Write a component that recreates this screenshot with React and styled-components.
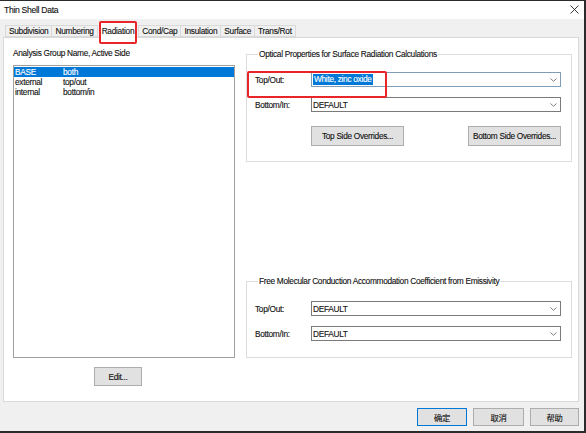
import React from "react";
import styled, { createGlobalStyle } from "styled-components";

const Global = createGlobalStyle`
  html, body { margin: 0; padding: 0; background: #2b2b2b; }
  body { width: 586px; height: 433px; overflow: hidden; }
  * { box-sizing: border-box; }
`;

const Screen = styled.div`
  width: 586px;
  height: 433px;
  padding: 1px 2px 2px 0;
  background: #2b2b2b;
`;

const Window = styled.div`
  width: 584px;
  height: 430px;
  background: #f0f0f0;
  display: flex;
  flex-direction: column;
  font-family: "Liberation Sans", Arial, "Noto Sans CJK SC", sans-serif;
  font-size: 8.3px;
  letter-spacing: -0.3px;
  color: #111;
  -webkit-text-stroke: 0.12px #111;
`;

const TitleBar = styled.div`
  height: 18px;
  background: #fff;
  display: flex;
  align-items: center;
  justify-content: space-between;
  padding: 0 5px 1px 4px;
  font-size: 8.6px;
`;

const Body = styled.div`
  flex: 1;
  display: flex;
  flex-direction: column;
  padding: 0 5px 0 3px;
`;

const TabStrip = styled.div`
  height: 18px;
  display: flex;
  align-items: flex-end;
  padding-left: 2px;
  position: relative;
  z-index: 1;
`;

const Tab = styled.div`
  height: ${(p) => (p.$active ? "16px" : "12px")};
  margin-bottom: ${(p) => (p.$active ? "-1px" : "0")};
  margin-left: ${(p) => (p.$first ? "0" : p.$active ? "1px" : "-1px")};
  margin-right: ${(p) => (p.$active ? "2px" : "0")};
  padding: 0 ${(p) => (p.$active ? "2px" : "3px")};
  letter-spacing: -0.27px;
  display: flex;
  align-items: center;
  background: ${(p) => (p.$active ? "#fff" : "#f0f0f0")};
  border: 1px solid #d9d9d9;
  border-bottom: ${(p) => (p.$active ? "none" : "1px solid #d9d9d9")};
  position: relative;
  z-index: ${(p) => (p.$active ? 2 : 0)};
`;

const Panel = styled.div`
  height: 365px;
  background: #fff;
  border: 1px solid #d9d9d9;
  display: flex;
  gap: 11px;
  padding: 10px 6px 0 9px;
`;

const LeftCol = styled.div`
  width: 222px;
  display: flex;
  flex-direction: column;
`;

const Caption = styled.div`
  height: 10px;
  line-height: 10px;
  margin-bottom: 7px;
`;

const ListBox = styled.div`
  height: 293px;
  border: 1px solid #a0a0a0;
  padding-top: 1px;
`;

const ListRow = styled.div`
  height: 10px;
  line-height: 10px;
  display: flex;
  padding-left: 1px;
  background: ${(p) => (p.$selected ? "#0078d7" : "transparent")};
  color: ${(p) => (p.$selected ? "#fff" : "#111")};
  -webkit-text-stroke: 0.12px ${(p) => (p.$selected ? "#fff" : "#111")};
`;

const NameCell = styled.span`
  width: 48px;
`;

const Button = styled.button`
  height: ${(p) => p.$h || 20}px;
  width: ${(p) => p.$w}px;
  padding: 0;
  background: #e1e1e1;
  border: 1px solid ${(p) => (p.$default ? "#0078d7" : "#adadad")};
  font: inherit;
  letter-spacing: inherit;
  color: #111;
`;

const EditButton = styled(Button)`
  margin: 9px 0 0 81px;
`;

const RightCol = styled.div`
  width: 326px;
  display: flex;
  flex-direction: column;
  padding-top: 1px;
`;

const Group = styled.fieldset`
  margin: 0;
  margin-top: ${(p) => p.$gap || 0}px;
  height: ${(p) => p.$h}px;
  flex: none;
  border: 1px solid #dcdcdc;
  padding: ${(p) => p.$pt}px 10px 0 8px;
  position: relative;
`;

const Rows = styled.div`
  display: flex;
  flex-direction: column;
  gap: 10px;
`;

const Legend = styled.legend`
  padding: 0 1px;
  margin-left: 3px;
  height: 10px;
  line-height: 10px;
`;

const FieldRow = styled.div`
  display: flex;
  align-items: center;
  height: 15px;
`;

const FieldLabel = styled.span`
  width: 56px;
`;

const Combo = styled.div`
  flex: 1;
  height: 15px;
  border: 1px solid ${(p) => (p.$focus ? "#7f9db9" : "#7a7a7a")};
  background: #fff;
  display: flex;
  align-items: center;
  justify-content: space-between;
  padding: 0 3px 0 1px;
`;

const Selected = styled.span`
  background: #0078d7;
  color: #fff;
  -webkit-text-stroke: 0.12px #fff;
  padding: 0 1px;
  line-height: 11px;
`;

const ButtonRow = styled.div`
  display: flex;
  justify-content: space-between;
  padding-left: 56px;
  margin-top: 4px;
`;

const Footer = styled.div`
  display: flex;
  justify-content: flex-end;
  gap: 6px;
  padding-top: 6px;
  font-family: "Noto Sans CJK SC", sans-serif;
`;

const Highlight = styled.div`
  position: absolute;
  border: 2px solid #e8262a;
  border-radius: 2px;
  pointer-events: none;
`;

const Chevron = () => (
  <svg width="7" height="4" viewBox="0 0 7 4">
    <path d="M0.5 0.5 L3.5 3.3 L6.5 0.5" fill="none" stroke="#606060" strokeWidth="0.8" />
  </svg>
);

const CloseIcon = () => (
  <svg width="9" height="9" viewBox="0 0 9 9">
    <path d="M0.5 0.5 L8.5 8.5 M8.5 0.5 L0.5 8.5" stroke="#222" strokeWidth="0.9" />
  </svg>
);

const tabs = ["Subdivision", "Numbering", "Radiation", "Cond/Cap", "Insulation", "Surface", "Trans/Rot"];

const groups = [
  ["BASE", "both"],
  ["external", "top/out"],
  ["internal", "bottom/in"],
];

const ComboField = ({ label, value, focus }) => (
  <FieldRow>
    <FieldLabel>{label}</FieldLabel>
    <Combo $focus={focus}>
      {focus ? <Selected>{value}</Selected> : <span>{value}</span>}
      <Chevron />
    </Combo>
  </FieldRow>
);

export default function App() {
  return (
    <Screen>
      <Global />
      <Window>
        <TitleBar>
          <span>Thin Shell Data</span>
          <CloseIcon />
        </TitleBar>
        <Body>
          <TabStrip>
            {tabs.map((t, i) => (
              <Tab key={t} $first={i === 0} $active={t === "Radiation"}>
                {t}
                {t === "Radiation" && (
                  <Highlight style={{ left: -1, top: -2, right: -1, bottom: -6 }} />
                )}
              </Tab>
            ))}
          </TabStrip>
          <Panel>
            <LeftCol>
              <Caption>Analysis Group Name, Active Side</Caption>
              <ListBox>
                {groups.map(([n, s], i) => (
                  <ListRow key={n} $selected={i === 0}>
                    <NameCell>{n}</NameCell>
                    <span>{s}</span>
                  </ListRow>
                ))}
              </ListBox>
              <EditButton $w={48} $h={19}>Edit...</EditButton>
            </LeftCol>
            <RightCol>
              <Group $h={113} $pt={13}>
                <Legend>Optical Properties for Surface Radiation Calculations</Legend>
                <Rows>
                  <ComboField label="Top/Out:" value="White, zinc oxide" focus />
                  <ComboField label="Bottom/In:" value="DEFAULT" />
                  <ButtonRow>
                    <Button $w={93}>Top Side Overrides...</Button>
                    <Button $w={93}>Bottom Side Overrides...</Button>
                  </ButtonRow>
                </Rows>
                <Highlight style={{ left: 0, top: 12, width: 140, height: 27 }} />
              </Group>
              <Group $gap={114} $h={82} $pt={15}>
                <Legend>Free Molecular Conduction Accommodation Coefficient from Emissivity</Legend>
                <Rows>
                  <ComboField label="Top/Out:" value="DEFAULT" />
                  <ComboField label="Bottom/In:" value="DEFAULT" />
                </Rows>
              </Group>
            </RightCol>
          </Panel>
          <Footer>
            <Button $w={50} $h={18} $default>确定</Button>
            <Button $w={51} $h={18}>取消</Button>
            <Button $w={49} $h={18}>帮助</Button>
          </Footer>
        </Body>
      </Window>
    </Screen>
  );
}
